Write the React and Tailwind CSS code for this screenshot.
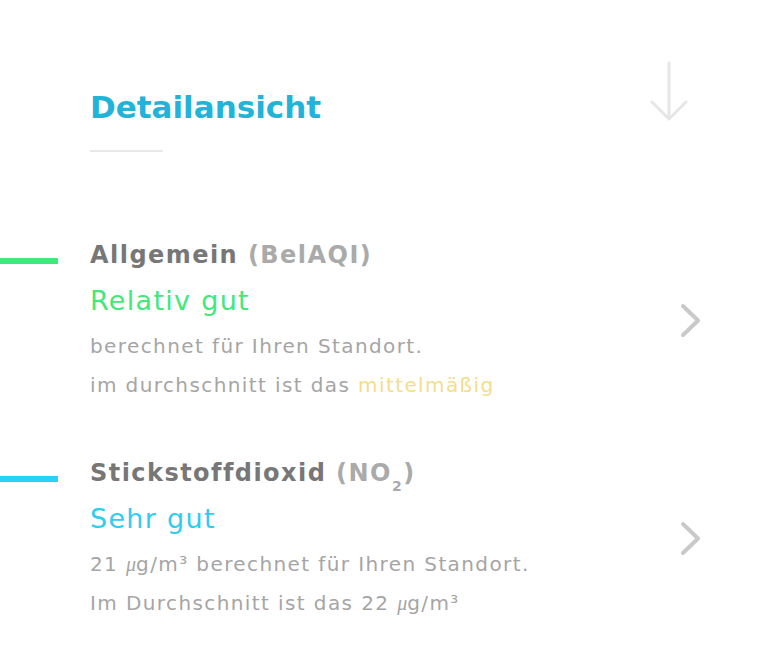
const Mu = () => <span className="italic font-['Liberation_Serif',serif] tracking-normal">μ</span>;

function Chevron() {
  return (
    <svg width="24" height="40" viewBox="0 0 24 40" className="shrink-0 mr-[57px] mb-[6px]">
      <path d="M5 6 L20 20.5 L5 35" fill="none" stroke="#c9c9c9" strokeWidth="4" strokeLinecap="round" strokeLinejoin="round" />
    </svg>
  );
}

function Section({ barColor, title, status, statusColor, lines, className = '' }) {
  return (
    <div className={`flex items-center ${className}`}>
      <div className="w-[58px] self-stretch shrink-0">
        <div className={`h-[6px] mt-[18px] ${barColor}`} />
      </div>
      <div className="ml-[32px] flex-1">
        <h2 className="text-[24px] leading-[30px] font-bold tracking-[1.45px]">{title}</h2>
        <p className={`text-[27px] leading-[32px] mt-[15px] tracking-[1.3px] ${statusColor}`}>{status}</p>
        <div className="mt-[10px] text-[20px] leading-[39px] text-[#a5a5a5] tracking-[1.4px]">{lines}</div>
      </div>
      <Chevron />
    </div>
  );
}

export default function App() {
  return (
    <div className="min-h-screen bg-white pt-[61px] pb-10 font-['DejaVu_Sans',sans-serif]">
      <div className="flex justify-between items-start pl-[90px] pr-[70px]">
        <div className="mt-[26px]">
          <h1 className="text-[31px] leading-[40px] font-bold text-[#22b3d8]">Detailansicht</h1>
          <div className="mt-[23px] w-[73px] h-[2px] bg-[#e8e8e8]" />
        </div>
        <svg width="40" height="60" viewBox="0 0 40 60">
          <path d="M20 2 V57 M3 41 L20 58 L37 41" fill="none" stroke="#e6e6e6" strokeWidth="3" strokeLinecap="round" strokeLinejoin="round" />
        </svg>
      </div>

      <Section
        className="mt-[88px]"
        barColor="bg-[#3eeb78]"
        title={<><span className="text-[#777777]">Allgemein</span> <span className="text-[#aaaaaa]">(BelAQI)</span></>}
        status="Relativ gut"
        statusColor="text-[#40e97c]"
        lines={<>
          <p>berechnet für Ihren Standort.</p>
          <p>im durchschnitt ist das <span className="text-[#f2de8c]">mittelmäßig</span></p>
        </>}
      />

      <Section
        className="mt-[53px]"
        barColor="bg-[#2ad0f5]"
        title={<><span className="text-[#777777]">Stickstoffdioxid</span> <span className="text-[#aaaaaa]">(NO<sub className="text-[14px] align-[-6px]">2</sub>)</span></>}
        status="Sehr gut"
        statusColor="text-[#2dcdf2]"
        lines={<>
          <p>21 <Mu />g/m³ berechnet für Ihren Standort.</p>
          <p>Im Durchschnitt ist das 22 <Mu />g/m³</p>
        </>}
      />
    </div>
  );
}
